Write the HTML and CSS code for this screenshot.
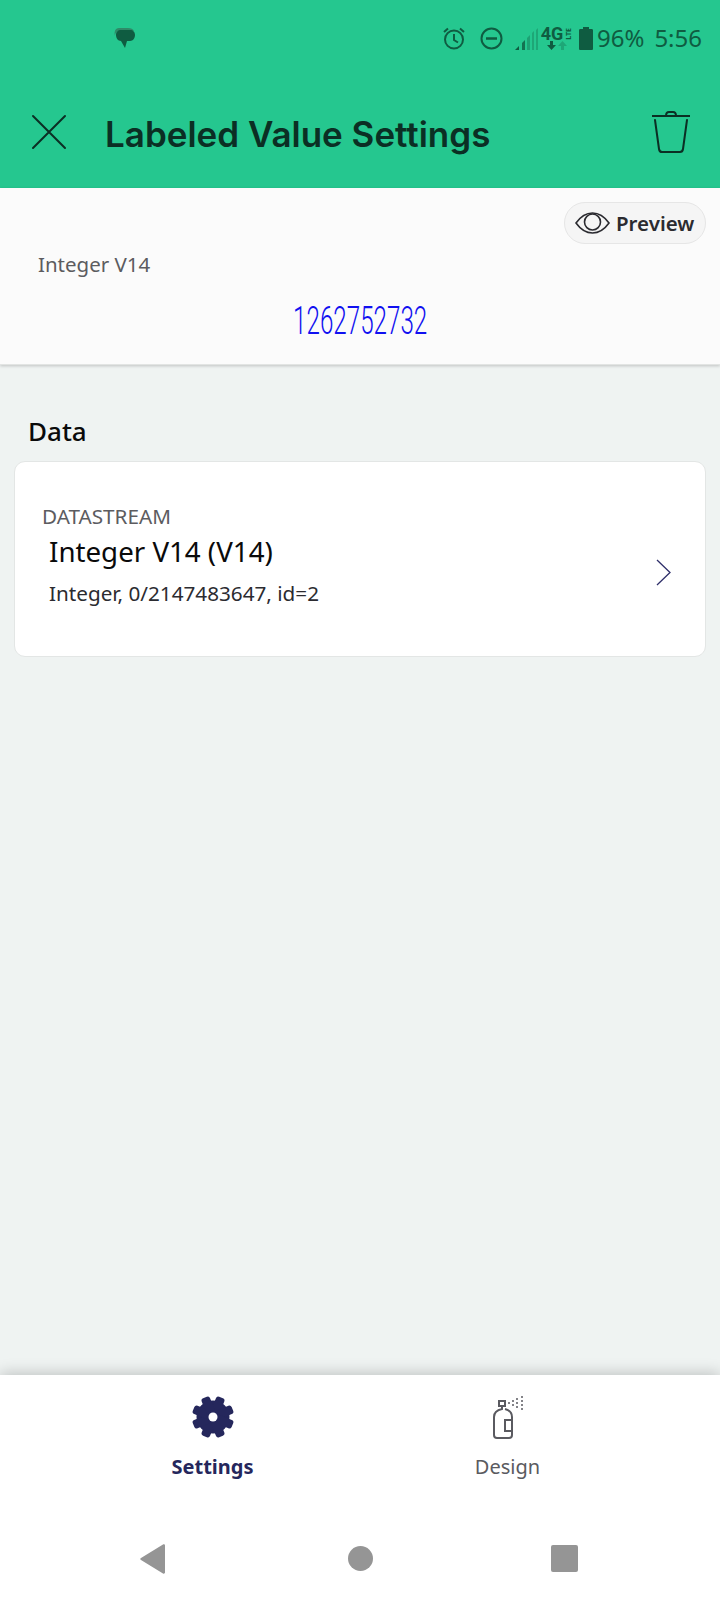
FILE: index.html
```html
<!DOCTYPE html>
<html lang="en">
<head>
	<meta charset="UTF-8">
	<title>Labeled Value Settings</title>
	<link rel="stylesheet" href="styles.css">
</head>
<body>
	<div class="app">
		<header class="top">
			<div class="status">
				<svg class="chat-icon" width="22" height="21" viewBox="0 0 22 21">
					<path d="M5 0h9c3 0 5 1 6 3H6C3 3 1 5 1 8 0 4 1 0 5 0z" fill="#2f8a68"/>
					<path d="M7 2h9c3 0 5 2 5 5s-2 6-5 6h-3l-2 7-4-7H7c-3 0-5-3-5-6s2-5 5-5z" fill="#0f5c41"/>
				</svg>
				<div class="status-right">
					<svg class="alarm" width="24" height="24" viewBox="0 0 24 24" fill="none" stroke="#0f5c41" stroke-width="2">
						<circle cx="12" cy="13.5" r="9"/>
						<path d="M12 8v6l4 2.500M2 6l4-3.500M22 6l-4-3.500"/>
					</svg>
					<svg class="dnd" width="23" height="23" viewBox="0 0 23 23" fill="none" stroke="#0f5c41" stroke-width="2">
						<circle cx="11.500" cy="11.500" r="10"/>
						<path d="M6 11.500h11" stroke-width="2.500"/>
					</svg>
					<svg class="signal" width="24" height="23" viewBox="0 0 24 23">
						<path d="M0 23l4-4v4z" fill="#0f5c41"/>
						<path d="M7 23v-7l3-3v10z" fill="#0f5c41" opacity=".8"/>
						<path d="M12 23V11l3-3v15z" fill="#0f5c41" opacity=".35"/>
						<path d="M17 23V6l2-2v19z" fill="#0f5c41" opacity=".3"/>
						<path d="M21 23V3l2-2v22z" fill="#0f5c41" opacity=".3"/>
					</svg>
					<div class="net">
						<div class="net-top"><span class="net-4g">4G</span><span class="net-lte">LTE</span></div>
						<svg width="20" height="9" viewBox="0 0 20 9">
							<path d="M3 0h3v4h3L4.500 9 0 4h3z" fill="#0f5c41"/>
							<path d="M14 9h3V5h3L15.500 0 11 5h3z" fill="#0f5c41" opacity=".3"/>
						</svg>
					</div>
					<svg class="battery" width="14" height="23" viewBox="0 0 14 23">
						<path d="M4 0h6v2h2.500c1 0 1.500.5 1.500 1.500V21.500c0 1-.5 1.500-1.500 1.500h-11C.5 23 0 22.500 0 21.500V3.500C0 2.500.5 2 1.500 2H4z" fill="#0f5c41"/>
					</svg>
					<span class="status-text pct">96%</span>
					<span class="status-text clock">5:56</span>
				</div>
			</div>
			<div class="titlebar">
				<svg class="close-icon" width="36" height="36" viewBox="0 0 36 36" fill="none" stroke="#0b2f24" stroke-width="2" stroke-linecap="round">
					<path d="M2 2l32 32M34 2L2 34"/>
				</svg>
				<h1 class="title">Labeled Value Settings</h1>
				<svg class="trash-icon" width="38" height="42" viewBox="0 0 38 42" fill="none" stroke="#0b2f24" stroke-width="2">
					<path d="M0 5h38M14 5c0-2 1-4 3-4h4c2 0 3 2 3 4"/>
					<path d="M3 9l4 29c.3 2 1 3 3 3h18c2 0 2.700-1 3-3l4-29" stroke-linecap="round"/>
				</svg>
			</div>
		</header>

		<section class="preview">
			<button class="preview-btn">
				<svg width="35" height="22" viewBox="0 0 35 22" fill="none" stroke="#2b2b30" stroke-width="1.600">
					<path d="M1 11C6 4 11 1 17.500 1S29 4 34 11c-5 7-10 10-16.500 10S6 18 1 11z"/>
					<circle cx="17.500" cy="10" r="8"/>
				</svg>
				Preview
			</button>
			<div class="preview-label">Integer V14</div>
			<div class="preview-value"><span>1262752732</span></div>
		</section>

		<main class="content">
			<h2 class="section-title">Data</h2>
			<div class="card">
				<div class="card-text">
					<div class="card-label">DATASTREAM</div>
					<div class="card-name">Integer V14 (V14)</div>
					<div class="card-sub">Integer, 0/2147483647, id=2</div>
				</div>
				<svg class="chevron" width="15" height="27" viewBox="0 0 15 27" fill="none" stroke="#2f2f6a" stroke-width="1.300">
					<path d="M1 1l13 12.500L1 26"/>
				</svg>
			</div>
		</main>

		<nav class="tabs">
			<div class="tab tab-active">
				<svg width="44" height="44" viewBox="0 0 44 44" fill="#25275c">
					<g transform="rotate(22.5 22 22)">
						<circle cx="22" cy="22" r="16.500"/>
						<rect x="17.500" y="1" width="9" height="42" rx="2.500"/>
						<rect x="17.500" y="1" width="9" height="42" rx="2.500" transform="rotate(45 22 22)"/>
						<rect x="17.500" y="1" width="9" height="42" rx="2.500" transform="rotate(90 22 22)"/>
						<rect x="17.500" y="1" width="9" height="42" rx="2.500" transform="rotate(135 22 22)"/>
					</g>
					<circle cx="22" cy="22" r="4.500" fill="#fff"/>
				</svg>
				<span>Settings</span>
			</div>
			<div class="tab">
				<svg width="32" height="44" viewBox="0 0 32 44" fill="none" stroke="#5a5a60" stroke-width="2">
					<rect x="7" y="6" width="6" height="5"/>
					<path d="M10 11v3C5 15 2 18 2 22v18c0 2 1 3 3 3h12c2 0 3-1 3-3V22c0-4-3-7-7-8"/>
					<path d="M20 25h-7v11h7"/>
					<g fill="#5a5a60" stroke="none">
						<circle cx="17" cy="8" r="1"/>
						<circle cx="21" cy="6" r="1"/>
						<circle cx="21" cy="10" r="1"/>
						<circle cx="25" cy="4" r="1"/>
						<circle cx="25" cy="8" r="1"/>
						<circle cx="25" cy="12" r="1"/>
						<circle cx="30" cy="2" r="1"/>
						<circle cx="30" cy="6" r="1"/>
						<circle cx="30" cy="10" r="1"/>
						<circle cx="30" cy="14" r="1"/>
					</g>
				</svg>
				<span>Design</span>
			</div>
		</nav>

		<div class="sysbar">
			<svg width="26" height="30" viewBox="0 0 26 30"><path d="M25 1.500v27c0 1-1 1.500-2 1L1 16c-1-.500-1-1.500 0-2L23 .500c1-.500 2 0 2 1z" fill="#959595"/></svg>
			<div class="sys-circle"></div>
			<div class="sys-square"></div>
		</div>
	</div>
</body>
</html>
```

FILE: styles.css
```css
*{
	box-sizing: border-box;
}

body{
	margin: 0;
	font-family: "Noto Sans", sans-serif;
}

.app{
	display: flex;
	flex-direction: column;
	width: 720px;
	height: 1600px;
	background-color: #eff3f2;
}

.top{
	background-color: #25c78f;
	height: 188px;
}

.status{
	display: flex;
	align-items: center;
	justify-content: space-between;
	height: 76px;
	padding: 0 18px 0 114px;
}

.status-right{
	display: flex;
	align-items: center;
}

.dnd{
	margin-left: 14px;
}

.signal{
	margin-left: 12px;
}

.net{
	display: flex;
	flex-direction: column;
	align-items: center;
	width: 28px;
	margin-left: 4px;
	color: #0f5c41;
}

.net-top{
	display: flex;
	align-items: center;
	height: 15px;
}

.net-4g{
	font-family: "Roboto", sans-serif;
	font-size: 18px;
	font-weight: 700;
}

.net-lte{
	font-size: 7px;
	font-weight: 700;
	writing-mode: vertical-rl;
	transform: rotate(180deg);
	margin-left: 1px;
}

.battery{
	margin-left: 8px;
}

.status-text{
	font-size: 24px;
	color: #0f5c41;
	line-height: 1;
}

.pct{
	margin-left: 4px;
}

.clock{
	margin-left: 10px;
}

.titlebar{
	display: flex;
	align-items: center;
	height: 112px;
	padding: 0 30px 0 31px;
}

.title{
	flex: 1;
	margin: 3px 0 0 38px;
	font-family: "Inter", sans-serif;
	font-size: 35px;
	font-weight: 600;
	color: #0b2f24;
}

.preview{
	position: relative;
	height: 177px;
	padding: 63px 0 0 38px;
	background-color: #fbfbfb;
	border-bottom: 1px solid #e2e4e3;
	box-shadow: 0 1px 3px rgba(0, 0, 0, .2);
}

.preview-btn{
	position: absolute;
	top: 14px;
	right: 14px;
	display: flex;
	align-items: center;
	gap: 6px;
	width: 142px;
	height: 42px;
	padding: 0 0 0 10px;
	border: 1px solid #e6e6e6;
	border-radius: 21px;
	background-color: #f5f5f5;
	font-family: "Noto Sans", sans-serif;
	font-size: 20.5px;
	font-weight: 600;
	color: #2b2b30;
}

.preview-label{
	font-size: 20.5px;
	line-height: 26px;
	color: #5c5c60;
}

.preview-value{
	margin: 21px 0 0 -38px;
	text-align: center;
	font-family: "Roboto", sans-serif;
	font-weight: 300;
	font-size: 39px;
	line-height: 46px;
	color: #1010f0;
}

.preview-value span{
	display: inline-block;
	transform: scaleX(.62);
}

.content{
	flex: 1;
	padding: 0 14px;
}

.section-title{
	margin: 49px 0 13px 14px;
	font-size: 26px;
	line-height: 34px;
	font-weight: 500;
	color: #0a0a0a;
}

.card{
	display: flex;
	align-items: center;
	justify-content: space-between;
	height: 196px;
	padding: 0 34px 0 28px;
	background-color: #fff;
	border: 1px solid #e3e6e5;
	border-radius: 11px;
}

.card-text{
	margin-top: -9px;
}

.card-label{
	margin-left: -1px;
	font-size: 20.7px;
	line-height: 26px;
	color: #5c5c60;
}

.card-name{
	margin: 5px 0 0 6px;
	font-size: 27.7px;
	line-height: 34px;
	color: #0a0a0a;
}

.card-sub{
	margin: 12px 0 0 6px;
	font-size: 20.7px;
	line-height: 26px;
	color: #2b2b30;
}

.chevron{
	margin-top: 26px;
}

.tabs{
	display: flex;
	justify-content: center;
	gap: 155px;
	height: 128px;
	padding-top: 20px;
	background-color: #fff;
	box-shadow: 0 -2px 14px rgba(0, 0, 0, .2);
}

.tab{
	display: flex;
	flex-direction: column;
	align-items: center;
	width: 140px;
	font-size: 20px;
	line-height: 28px;
	color: #5a5a60;
}

.tab span{
	margin-top: 14px;
}

.tab-active{
	font-weight: 700;
	color: #25275c;
}

.sysbar{
	display: flex;
	align-items: center;
	justify-content: space-between;
	height: 97px;
	padding: 14px 142px 0 140px;
	background-color: #fff;
}

.sys-circle{
	width: 25px;
	height: 25px;
	margin-left: 3px;
	border-radius: 50%;
	background-color: #959595;
}

.sys-square{
	width: 27px;
	height: 27px;
	border-radius: 2px;
	background-color: #959595;
}
```
